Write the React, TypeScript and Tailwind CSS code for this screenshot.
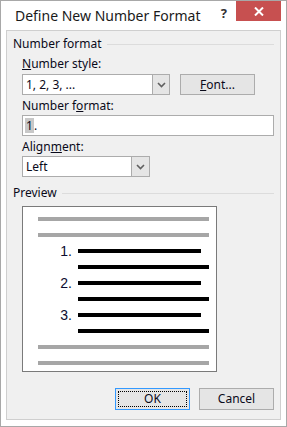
import React from 'react';

const ui = { fontFamily: '"Noto Sans", "Liberation Sans", sans-serif' };
const arial = { fontFamily: '"Liberation Sans", Arial, sans-serif' };

const Chevron: React.FC = () => (
  <svg width="9" height="6" viewBox="0 0 9 6" className="text-[#606060]">
    <path d="M1 1 L4.5 4.5 L8 1" fill="none" stroke="currentColor" strokeWidth="1.6" />
  </svg>
);

const Combo: React.FC<{ value: string; width: string; btn: string }> = ({ value, width, btn }) => (
  <div className={`flex h-[21px] ${width} border border-[#acacac] bg-white`}>
    <div className="flex-1 px-[3px] text-[12px] leading-[19px]">{value}</div>
    <div className={`flex ${btn} items-center justify-center border-l border-[#acacac] bg-[#e5e5e5]`}>
      <Chevron />
    </div>
  </div>
);

const GroupLabel: React.FC<{ text: string }> = ({ text }) => (
  <div className="-ml-[9px] flex h-[16px] items-center gap-[5px] text-[12px] leading-[16px]">
    <span>{text}</span>
    <div className="h-px flex-1 bg-[#dcdcdc]" />
  </div>
);

const Bar: React.FC<{ gray?: boolean }> = ({ gray }) => (
  <div className={`h-[4px] ${gray ? 'bg-[#a6a6a6]' : 'bg-black'}`} />
);

const NumRow: React.FC<{ n: string }> = ({ n }) => (
  <div className="flex h-[4px] items-center">
    <span className="w-[40px] pr-[6px] text-right text-[14px] leading-none text-[#0c0c30]" style={arial}>
      {n}
    </span>
    <div className="mr-[8px] h-[4px] flex-1 bg-black" />
  </div>
);

const IndentBar: React.FC = () => <div className="ml-[40px] h-[4px] bg-black" />;

const App: React.FC = () => {
  return (
    <div className="flex h-[427px] w-[287px] flex-col border border-[#a8a8a8] bg-white text-[#0a0a1a]" style={ui}>
      {/* title bar */}
      <div className="flex h-[29px] items-start">
        <div className="pl-[14px] pt-[5px] text-[14px] leading-[20px] text-[#1a1a1a]">Define New Number Format</div>
        <div className="ml-auto pt-[4px] pr-[9px] text-[13px] font-bold leading-[16px] text-[#333]">?</div>
        <div className="mr-[5px] flex h-[20px] w-[45px] items-center justify-center bg-[#c75050]">
          <svg width="10" height="9" viewBox="0 0 10 9">
            <path d="M1 0.5 L9 8.5 M9 0.5 L1 8.5" stroke="white" strokeWidth="2" />
          </svg>
        </div>
      </div>

      {/* client area */}
      <div className="mx-[5px] mb-[6px] flex flex-1 flex-col border border-[#cfcfcf] bg-[#f0f0f0] pl-[15px] pr-[6px] pt-[5px]">
        <GroupLabel text="Number format" />
        <div className="mt-[4px] h-[16px] text-[12px] leading-[16px]">
          <span className="underline">N</span>umber style:
        </div>
        <div className="mt-[2px] flex gap-[10px]">
          <Combo value="1, 2, 3, ..." width="w-[148px]" btn="w-[17px]" />
          <div className="flex h-[21px] w-[75px] items-center justify-center border border-[#acacac] bg-[#e5e5e5] text-[12px]">
            <span className="underline">F</span>ont...
          </div>
        </div>
        <div className="mt-[3px] h-[16px] text-[12px] leading-[16px]">
          Number f<span className="underline">o</span>rmat:
        </div>
        <div className="mt-[1px] flex h-[21px] items-center border border-[#acacac] bg-white pl-[2px] text-[12px]">
          <span className="bg-[#c8c8c8] px-[1px] leading-[15px]">1</span>
          <span className="leading-[15px]">.</span>
        </div>
        <div className="mt-[3px] h-[16px] text-[12px] leading-[16px]">
          Align<span className="underline">m</span>ent:
        </div>
        <div className="mt-[1px]">
          <Combo value="Left" width="w-[128px]" btn="w-[18px]" />
        </div>

        <div className="mt-[8px]">
          <GroupLabel text="Preview" />
        </div>
        <div className="mt-[5px] flex h-[166px] w-[195px] flex-col gap-[12px] border border-[#7a7a7a] bg-white pl-[15px] pr-[7px] pt-[10px]">
          <Bar gray />
          <Bar gray />
          <NumRow n="1." />
          <IndentBar />
          <NumRow n="2." />
          <IndentBar />
          <NumRow n="3." />
          <IndentBar />
          <Bar gray />
          <Bar gray />
        </div>

        <div className="mt-[16px] flex justify-end gap-[9px]">
          <div className="flex h-[22px] w-[75px] items-center justify-center border border-[#3399ff] bg-[#e5e5e5] p-[2px]">
            <div className="flex h-full w-full items-center justify-center border border-dotted border-black text-[12px]">OK</div>
          </div>
          <div className="flex h-[22px] w-[75px] items-center justify-center border border-[#acacac] bg-[#e5e5e5] text-[12px]">
            Cancel
          </div>
        </div>
      </div>
    </div>
  );
};

export default App;
